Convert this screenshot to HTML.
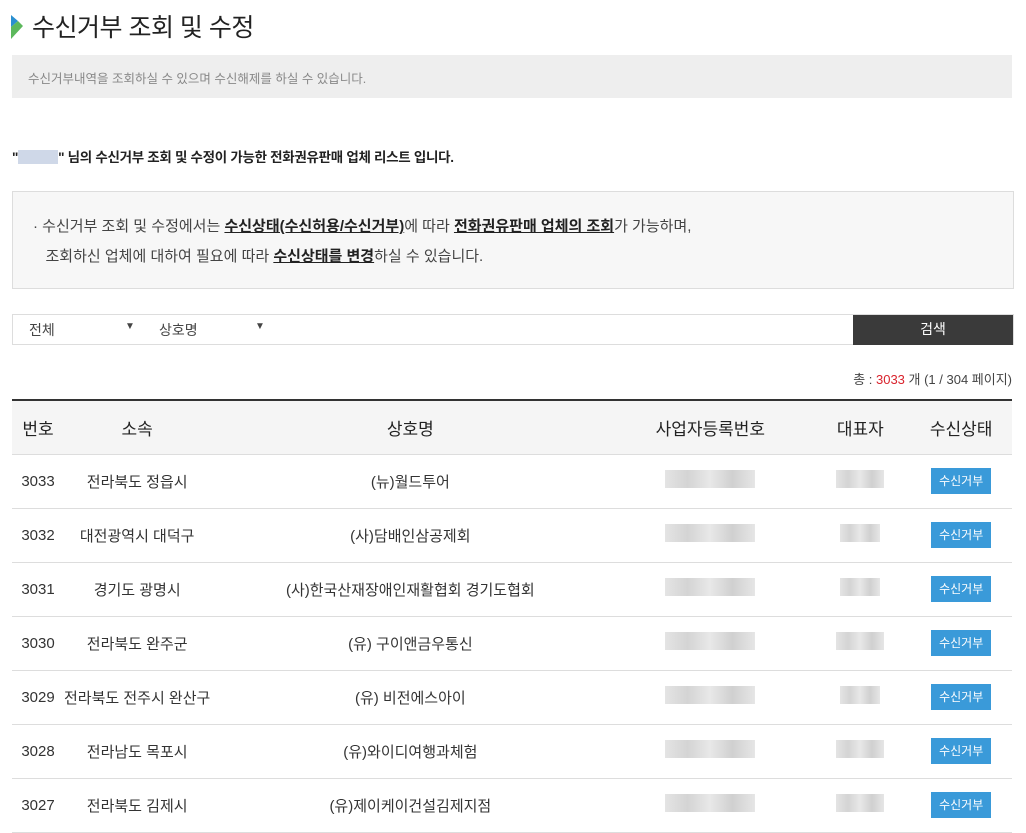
<!DOCTYPE html>
<html><head><meta charset="utf-8"><style>
*{margin:0;padding:0;box-sizing:border-box}
body{width:1026px;height:830px;overflow:hidden;background:#fff;font-family:"Liberation Sans","Noto Sans CJK KR",sans-serif;color:#333;position:relative}
.abs{position:absolute}
h1{position:absolute;left:32px;top:8px;font-size:25px;font-weight:normal;color:#222;letter-spacing:-0.5px}
.desc{left:12px;top:55px;width:1000px;height:43px;background:#eee;font-size:12.5px;color:#888;padding:13px 16px}
.intro{left:12px;top:146px;font-size:13.5px;font-weight:bold;color:#222;letter-spacing:-0.3px}
.blur{display:inline-block;background:#cfd8e8;height:14px;vertical-align:-2px}
.box{left:12px;top:191px;width:1002px;height:98px;border:1px solid #ddd;background:#f7f7f7;font-size:15px;color:#444;padding:20px 20px;line-height:30px}
.box b{text-decoration:underline;color:#222}
.search{left:12px;top:314px;width:1002px;height:31px;border:1px solid #ddd;font-size:14px;color:#444}
.btn{position:absolute;right:0;top:0;width:160px;height:30px;background:#3a3a3a;color:#fff;text-align:center;line-height:29px}
.total{right:14px;top:369px;font-size:13px;color:#444}
table{position:absolute;left:12px;top:399px;width:1000px;border-collapse:collapse;border-top:2px solid #333;font-size:15px;color:#333}
th{height:54px;background:#f5f5f5;font-weight:normal;font-size:17px;color:#222;border-bottom:1px solid #ddd;white-space:nowrap}
td{height:54px;border-bottom:1px solid #ddd;text-align:center;white-space:nowrap}
.g{display:inline-block;height:18px;background:linear-gradient(90deg,#e4e4e4,#d4d4d4,#e8e8e8,#d0d0d0,#e6e6e6)}
.st{display:inline-block;background:#3a9ad9;color:#fff;font-size:12px;padding:5px 8px;line-height:16px}
</style></head><body>
<svg class="abs" style="left:11px;top:15px" width="12" height="24"><polygon points="0,0 7,6 0,12" fill="#2a8fd0"/><polygon points="7,6 12,11 0,24 0,12" fill="#5cb85c"/></svg>
<h1>수신거부 조회 및 수정</h1>
<div class="abs desc">수신거부내역을 조회하실 수 있으며 수신해제를 하실 수 있습니다.</div>
<div class="abs intro">"<span class="blur" style="width:40px"></span>" 님의 수신거부 조회 및 수정이 가능한 전화권유판매 업체 리스트 입니다.</div>
<div class="abs box">· 수신거부 조회 및 수정에서는 <b>수신상태(수신허용/수신거부)</b>에 따라 <b>전화권유판매 업체의 조회</b>가 가능하며,<br>&nbsp;&nbsp;&nbsp;조회하신 업체에 대하여 필요에 따라 <b>수신상태를 변경</b>하실 수 있습니다.</div>
<div class="abs search"><span class="abs" style="left:16px;top:5px">전체</span><span class="abs" style="left:112px;top:6px;font-size:10px">▼</span><span class="abs" style="left:146px;top:5px">상호명</span><span class="abs" style="left:242px;top:6px;font-size:10px">▼</span><div class="btn">검색</div></div>
<div class="abs total">총 : <span style="color:#d9232d">3033</span> 개 (1 / 304 페이지)</div>
<table>
<tr><th style="width:52px">번호</th><th style="width:145px">소속</th><th style="width:400px">상호명</th><th style="width:200px">사업자등록번호</th><th style="width:100px">대표자</th><th>수신상태</th></tr>
<tr><td>3033</td><td>전라북도 정읍시</td><td>(뉴)월드투어</td><td><span class="g" style="width:90px"></span></td><td><span class="g" style="width:48px"></span></td><td><span class="st">수신거부</span></td></tr>
<tr><td>3032</td><td>대전광역시 대덕구</td><td>(사)담배인삼공제회</td><td><span class="g" style="width:90px"></span></td><td><span class="g" style="width:40px"></span></td><td><span class="st">수신거부</span></td></tr>
<tr><td>3031</td><td>경기도 광명시</td><td>(사)한국산재장애인재활협회 경기도협회</td><td><span class="g" style="width:90px"></span></td><td><span class="g" style="width:40px"></span></td><td><span class="st">수신거부</span></td></tr>
<tr><td>3030</td><td>전라북도 완주군</td><td>(유) 구이앤금우통신</td><td><span class="g" style="width:90px"></span></td><td><span class="g" style="width:48px"></span></td><td><span class="st">수신거부</span></td></tr>
<tr><td>3029</td><td>전라북도 전주시 완산구</td><td>(유) 비전에스아이</td><td><span class="g" style="width:90px"></span></td><td><span class="g" style="width:40px"></span></td><td><span class="st">수신거부</span></td></tr>
<tr><td>3028</td><td>전라남도 목포시</td><td>(유)와이디여행과체험</td><td><span class="g" style="width:90px"></span></td><td><span class="g" style="width:48px"></span></td><td><span class="st">수신거부</span></td></tr>
<tr><td>3027</td><td>전라북도 김제시</td><td>(유)제이케이건설김제지점</td><td><span class="g" style="width:90px"></span></td><td><span class="g" style="width:48px"></span></td><td><span class="st">수신거부</span></td></tr>
</table>
</body></html>
